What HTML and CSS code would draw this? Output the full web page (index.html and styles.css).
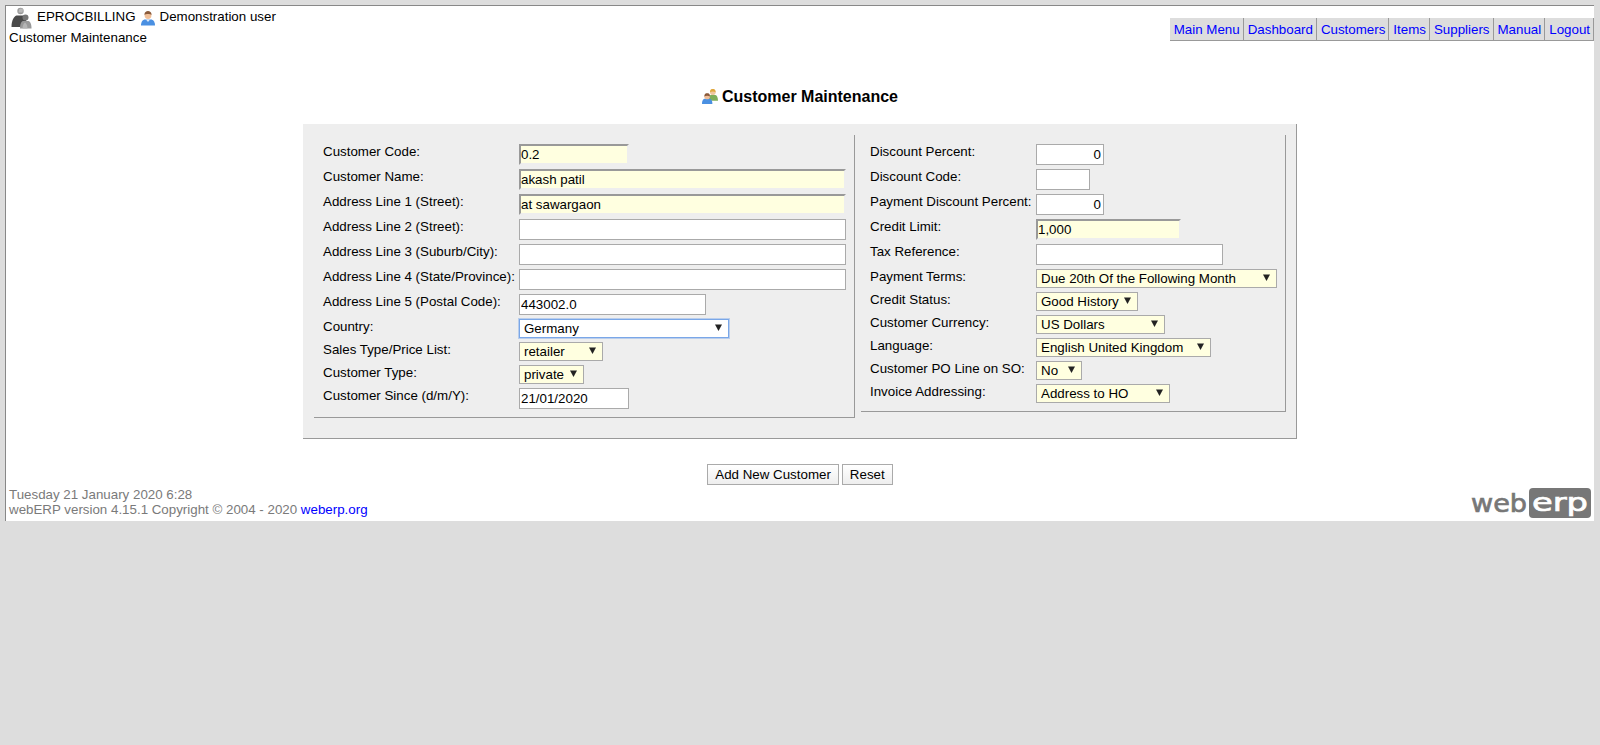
FILE: index.html
```html
<!DOCTYPE html>
<html lang="en">
<head>
<meta charset="utf-8">
<title>Customer Maintenance</title>
<link rel="stylesheet" href="styles.css">
</head>
<body>
<div class="page">
  <header class="top">
    <div class="who">
      <div class="who-row">
        <svg class="ico-company" viewBox="0 0 22 22" width="22" height="22" aria-hidden="true">
          <circle cx="10.500" cy="4" r="3.200" fill="#999"/>
          <path d="M9 2.500c1-1.500 3-1.500 4 0l-.5 3h-4z" fill="#bbb"/>
          <path d="M1.500 20c0-6 2-10.500 5-11.500h7c2 0 3 3 3 11.500z" fill="#4a4a4a"/>
          <circle cx="15.500" cy="10.500" r="3" fill="#777"/>
          <path d="M10 21.500c0-5 1.500-7.500 3.500-7.500h4.500c2 0 3.500 2.500 3.500 7.500z" fill="#999"/>
          <path d="M12.500 21.500c.2-3 1-5 2.500-6 1.500 1 2.500 3 2.500 6z" fill="#b5b5b5"/>
        </svg>
        <span class="who-text">EPROCBILLING</span>
        <svg class="ico-user" viewBox="0 0 16 16" width="16" height="16" aria-hidden="true">
          <path d="M1 15.500c0-4 2-6 4-6h6c2 0 4 2 4 6z" fill="#4a90e2"/>
          <path d="M6 9.500h4l-2 2.500z" fill="#dfeaf8"/>
          <circle cx="8" cy="5.500" r="3.400" fill="#f0bf98"/>
          <path d="M4.400 5c0-3 1.800-4 3.600-4s3.600 1 3.600 4c-1.500-1.300-5.700-1.300-7.200 0z" fill="#8a5a3a"/>
        </svg>
        <span class="who-user">Demonstration user</span>
      </div>
      <div class="who-page">Customer Maintenance</div>
    </div>
    <nav class="menu">
      <a href="#">Main Menu</a><a href="#">Dashboard</a><a href="#">Customers</a><a href="#">Items</a><a href="#">Suppliers</a><a href="#">Manual</a><a href="#">Logout</a>
    </nav>
  </header>

  <h1 class="title">
    <svg class="ico-title" viewBox="0 0 17 17" width="16" height="17" aria-hidden="true">
      <path d="M6.500 13c0-4 1.500-6 3-6h4.500c1.500 0 3 2 3 6z" fill="#7fae5a"/>
      <circle cx="11.500" cy="4" r="3" fill="#f0c8a0"/>
      <path d="M8.500 4c0-3 1.500-3.500 3-3.500s3 .5 3 3.500c-1.500-1-4.500-1-6 0z" fill="#e0a83e"/>
      <path d="M0 16.500c0-4 1.500-5.500 3-5.500h5c1.500 0 3 1.500 3 5.500z" fill="#4a90e2"/>
      <circle cx="5.500" cy="8.500" r="3" fill="#efbc98"/>
      <path d="M2.500 8.500c0-3 1.500-3.500 3-3.500s3 .5 3 3.500c-1.500-1-4.500-1-6 0z" fill="#8a5a3a"/>
    </svg>
    Customer Maintenance
  </h1>

  <form class="panel">
    <section class="col col-left">
      <table class="grid">
        <tr><td class="lbl lbl-left">Customer Code:</td><td><input class="fld req w-110" value="0.2"></td></tr>
        <tr><td class="lbl">Customer Name:</td><td><input class="fld req w-327" value="akash patil"></td></tr>
        <tr><td class="lbl">Address Line 1 (Street):</td><td><input class="fld req w-327" value="at sawargaon"></td></tr>
        <tr><td class="lbl">Address Line 2 (Street):</td><td><input class="fld w-327" value=""></td></tr>
        <tr><td class="lbl">Address Line 3 (Suburb/City):</td><td><input class="fld w-327" value=""></td></tr>
        <tr><td class="lbl">Address Line 4 (State/Province):</td><td><input class="fld w-327" value=""></td></tr>
        <tr><td class="lbl">Address Line 5 (Postal Code):</td><td><input class="fld w-187" value="443002.0"></td></tr>
        <tr><td class="lbl">Country:</td><td><select class="sel focused w-210"><option>Germany</option></select></td></tr>
        <tr><td class="lbl">Sales Type/Price List:</td><td><select class="sel w-84"><option>retailer</option></select></td></tr>
        <tr><td class="lbl">Customer Type:</td><td><select class="sel w-65"><option>private</option></select></td></tr>
        <tr><td class="lbl">Customer Since (d/m/Y):</td><td><input class="fld w-110" value="21/01/2020"></td></tr>
      </table>
    </section>
    <section class="col col-right">
      <table class="grid">
        <tr><td class="lbl lbl-right">Discount Percent:</td><td><input class="fld num w-68" value="0"></td></tr>
        <tr><td class="lbl">Discount Code:</td><td><input class="fld w-54" value=""></td></tr>
        <tr><td class="lbl">Payment Discount Percent:</td><td><input class="fld num w-68" value="0"></td></tr>
        <tr><td class="lbl">Credit Limit:</td><td><input class="fld req w-145" value="1,000"></td></tr>
        <tr><td class="lbl">Tax Reference:</td><td><input class="fld w-187" value=""></td></tr>
        <tr><td class="lbl">Payment Terms:</td><td><select class="sel w-241"><option>Due 20th Of the Following Month</option></select></td></tr>
        <tr><td class="lbl">Credit Status:</td><td><select class="sel w-102"><option>Good History</option></select></td></tr>
        <tr><td class="lbl">Customer Currency:</td><td><select class="sel w-129"><option>US Dollars</option></select></td></tr>
        <tr><td class="lbl">Language:</td><td><select class="sel w-175"><option>English United Kingdom</option></select></td></tr>
        <tr><td class="lbl">Customer PO Line on SO:</td><td><select class="sel w-46"><option>No</option></select></td></tr>
        <tr><td class="lbl">Invoice Addressing:</td><td><select class="sel w-134"><option>Address to HO</option></select></td></tr>
      </table>
    </section>
  </form>

  <div class="actions">
    <button type="button" class="btn">Add New Customer</button>
    <button type="button" class="btn">Reset</button>
  </div>

  <footer class="foot">
    <div class="foot-text">
      <div>Tuesday 21 January 2020 6:28</div>
      <div>webERP version 4.15.1 Copyright © 2004 - 2020 <a href="#">weberp.org</a></div>
    </div>
    <svg class="logo" viewBox="0 0 120 30" width="120" height="30" role="img" aria-label="webERP">
      <rect x="58" y="0" width="62" height="30" rx="4" fill="#777"/>
      <text class="logo-web" x="0" y="24" textLength="56" lengthAdjust="spacingAndGlyphs">web</text>
      <text class="logo-erp" x="61" y="23" textLength="56" lengthAdjust="spacingAndGlyphs">erp</text>
    </svg>
  </footer>
</div>
</body>
</html>
```
FILE: styles.css
```css
* { box-sizing: border-box; }
html, body { margin: 0; padding: 0; }
body {
  background: #ddd;
  height: 745px;
  padding: 5px 0 0 5px;
  font-family: "Liberation Sans", Arial, sans-serif;
  font-size: 13.33px;
  line-height: 15px;
  color: #000;
}
.page {
  width: 1589px;
  height: 516px;
  background: #fff;
  border-top: 1px solid #888;
  border-left: 1px solid #888;
}
.top {
  display: flex;
  justify-content: space-between;
  height: 39px;
}
.who { padding-left: 3px; }
.who-row { display: flex; height: 24px; align-items: flex-start; }
.ico-company { margin: 1px 0 0 1px; flex: none; }
.who-text { margin: 3px 0 0 5px; }
.ico-user { margin: 4px 0 0 4px; flex: none; }
.who-user { margin: 3px 0 0 4px; }
.menu { display: flex; margin-top: 12px; height: 23px; }
.menu a {
  display: block;
  padding: 4px 3px 3px 4px;
  background: #ddd;
  border-right: 1px solid #999;
  border-bottom: 1px solid #999;
  color: #00f;
  text-decoration: none;
}
.title {
  display: flex;
  justify-content: center;
  align-items: center;
  gap: 4px;
  height: 19px;
  margin: 42px 0 18px;
  font-size: 16px;
  font-weight: bold;
  line-height: 19px;
}
.ico-title { flex: none; }
.panel {
  display: flex;
  align-items: flex-start;
  gap: 6px;
  width: 994px;
  margin: 0 auto;
  padding: 11px 0 20px 11px;
  background: #eee;
  border-right: 1px solid #999;
  border-bottom: 1px solid #999;
}
.col {
  padding: 7px 0 6px 7px;
  border-right: 1px solid #999;
  border-bottom: 1px solid #999;
}
.col-left { width: 541px; }
.col-right { width: 425px; }
.grid { border-collapse: collapse; border-spacing: 0; }
.grid td { padding: 2px; vertical-align: top; }
.lbl { white-space: nowrap; }
.lbl-left { width: 196px; }
.lbl-right { width: 166px; }
.fld {
  display: block;
  height: 21px;
  padding: 0 1px;
  border: 1px solid #aaa;
  background: #fff;
  font: inherit;
  color: #000;
  border-radius: 0;
  outline: none;
}
.req {
  padding: 0;
  border: 2px solid;
  border-color: #999 #eee #eee #999;
  background: #ffffe0;
}
.num { text-align: right; padding-right: 2px; }
.sel {
  display: block;
  height: 19px;
  padding: 0 0 0 4px;
  border: 1px solid #aaa;
  border-radius: 0;
  font: inherit;
  color: #000;
  appearance: none;
  -webkit-appearance: none;
  background: #ffffe0 url("data:image/svg+xml,%3Csvg xmlns='http://www.w3.org/2000/svg' width='7' height='7'%3E%3Cpath d='M0 .5h7L3.500 7z' fill='%23222'/%3E%3C/svg%3E") no-repeat right 6px top 4px;
}
.focused {
  background-color: #fff;
  border-color: #7aa7e8;
  box-shadow: 0 0 0 1px rgba(122, 167, 232, .45);
}
.w-46 { width: 46px; }
.w-54 { width: 54px; }
.w-65 { width: 65px; }
.w-68 { width: 68px; }
.w-84 { width: 84px; }
.w-102 { width: 102px; }
.w-110 { width: 110px; }
.w-129 { width: 129px; }
.w-134 { width: 134px; }
.w-145 { width: 145px; }
.w-175 { width: 175px; }
.w-187 { width: 187px; }
.w-210 { width: 210px; }
.w-241 { width: 241px; }
.w-327 { width: 327px; }
.actions {
  display: flex;
  justify-content: center;
  gap: 3px;
  margin-top: 25px;
}
.btn {
  height: 21px;
  padding: 0 7px;
  border: 1px solid #aaa;
  border-radius: 0;
  background: linear-gradient(#fff, #eee);
  font: inherit;
  color: #000;
}
.foot {
  display: flex;
  justify-content: space-between;
  margin-top: 2px;
  padding: 0 3px;
}
.foot-text { color: #7a7a7a; }
.foot-text a { color: #00f; text-decoration: none; }
.logo { margin-top: 1px; }
.logo-web, .logo-erp { font-family: "DejaVu Sans", sans-serif; font-size: 25px; stroke-width: .7px; }
.logo-web { fill: #777; stroke: #777; }
.logo-erp { fill: #fff; stroke: #fff; }
```
